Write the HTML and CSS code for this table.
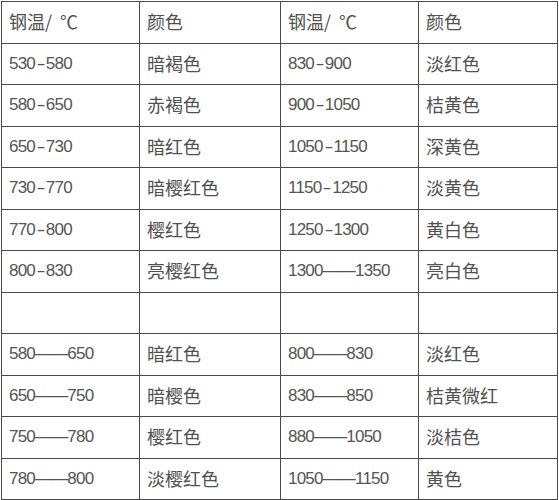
FILE: index.html
```html
<!DOCTYPE html>
<html lang="zh">
<head>
<meta charset="utf-8">
<link rel="stylesheet" href="styles.css">
</head>
<body>
<table class="grid">
  <colgroup>
    <col class="c1"><col class="c2"><col class="c3"><col class="c4">
  </colgroup>
  <tr><td class="hd">钢温/ ℃</td><td>颜色</td><td class="hd">钢温/ ℃</td><td>颜色</td></tr>
  <tr><td class="num">530<span class="hy">-</span>580</td><td>暗褐色</td><td class="num">830<span class="hy">-</span>900</td><td>淡红色</td></tr>
  <tr><td class="num">580<span class="hy">-</span>650</td><td>赤褐色</td><td class="num">900<span class="hy">-</span>1050</td><td>桔黄色</td></tr>
  <tr><td class="num">650<span class="hy">-</span>730</td><td>暗红色</td><td class="num">1050<span class="hy">-</span>1150</td><td>深黄色</td></tr>
  <tr><td class="num">730<span class="hy">-</span>770</td><td>暗樱红色</td><td class="num">1150<span class="hy">-</span>1250</td><td>淡黄色</td></tr>
  <tr><td class="num">770<span class="hy">-</span>800</td><td>樱红色</td><td class="num">1250<span class="hy">-</span>1300</td><td>黄白色</td></tr>
  <tr><td class="num">800<span class="hy">-</span>830</td><td>亮樱红色</td><td class="num">1300——1350</td><td>亮白色</td></tr>
  <tr><td></td><td></td><td></td><td></td></tr>
  <tr><td class="num">580——650</td><td>暗红色</td><td class="num">800——830</td><td>淡红色</td></tr>
  <tr><td class="num">650——750</td><td>暗樱色</td><td class="num">830——850</td><td>桔黄微红</td></tr>
  <tr><td class="num">750——780</td><td>樱红色</td><td class="num">880——1050</td><td>淡桔色</td></tr>
  <tr><td class="num">780——800</td><td>淡樱红色</td><td class="num">1050——1150</td><td>黄色</td></tr>
</table>
</body>
</html>
```
FILE: styles.css
```css
html, body {
  margin: 0;
  padding: 0;
  background: #ffffff;
}
.grid {
  border-collapse: collapse;
  table-layout: fixed;
  width: 556px;
  margin: 1px 0 0 1px;
  font-family: "Noto Sans CJK SC", sans-serif;
  font-size: 18px;
  color: #505050;
}
.c1 { width: 138px; }
.c2 { width: 141px; }
.c3 { width: 138px; }
.c4 { width: 139px; }
.grid tr {
  height: 41.5px;
}
.grid td {
  border: 1px solid #4a4a4a;
  padding: 0 0 0 7px;
  vertical-align: middle;
  white-space: nowrap;
  line-height: 1.2;
}
.grid td.num {
  font-family: "Liberation Sans", sans-serif;
  font-size: 17px;
  letter-spacing: -0.8px;
  color: #555555;
}
.hy {
  display: inline-block;
  margin: 0 3px;
  transform: scaleX(1.6);
}
.grid td.hd {
  word-spacing: 4px;
}
```
